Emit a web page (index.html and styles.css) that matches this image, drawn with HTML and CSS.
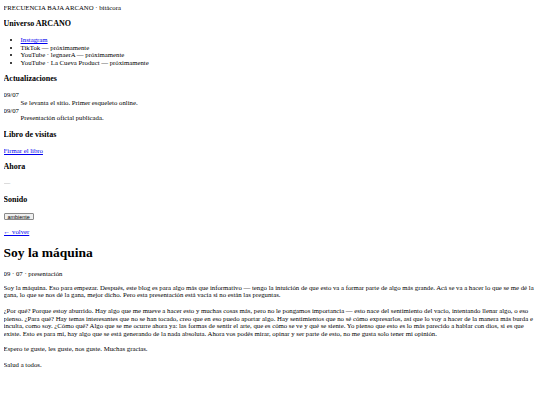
FILE: index.html
```html
<!DOCTYPE html>
<html lang="es">
<head>
<meta charset="utf-8">
<title>FRECUENCIA BAJA ARCANO · bitácora</title>
<link rel="stylesheet" href="styles.css">
</head>
<body class="page">
<div class="site-title">FRECUENCIA BAJA ARCANO · bitácora</div>

<h3 class="sec">Universo ARCANO</h3>
<ul class="links">
  <li><a href="#">Instagram</a></li>
  <li>TikTok — próximamente</li>
  <li>YouTube · legnaerA — próximamente</li>
  <li>YouTube · La Cueva Product — próximamente</li>
</ul>

<h3 class="sec">Actualizaciones</h3>
<dl class="updates">
  <dt>09/07</dt>
  <dd>Se levanta el sitio. Primer esqueleto online.</dd>
  <dt>09/07</dt>
  <dd>Presentación oficial publicada.</dd>
</dl>

<h3 class="sec">Libro de visitas</h3>
<p class="para"><a href="#">Firmar el libro</a></p>

<h3 class="sec">Ahora</h3>
<p class="para now">—</p>

<h3 class="sec">Sonido</h3>
<p class="para sound"><button class="btn" type="button">ambiente</button></p>

<p class="para"><a href="#">← volver</a></p>

<h1 class="post-title">Soy la máquina</h1>
<p class="meta">09 · 07 · presentación</p>

<p class="post-p">Soy la máquina. Eso para empezar. Después, este blog es para algo más que informativo — tengo la intuición de que esto va a formar parte de algo más grande. Acá se va a hacer lo que se me dé la gana, lo que se nos dé la gana, mejor dicho. Pero esta presentación está vacía si no están las preguntas.</p>

<p class="post-p">¿Por qué? Porque estoy aburrido. Hay algo que me mueve a hacer esto y muchas cosas más, pero no le pongamos importancia — esto nace del sentimiento del vacío, intentando llenar algo, o eso pienso. ¿Para qué? Hay temas interesantes que no se han tocado, creo que en eso puedo aportar algo. Hay sentimientos que no sé cómo expresarlos, así que lo voy a hacer de la manera más burda e inculta, como soy. ¿Cómo qué? Algo que se me ocurre ahora ya: las formas de sentir el arte, que es cómo se ve y qué se siente. Yo pienso que esto es lo más parecido a hablar con dios, si es que existe. Esto es para mí, hay algo que se está generando de la nada absoluta. Ahora vos podés mirar, opinar y ser parte de esto, no me gusta solo tener mi opinión.</p>

<p class="post-p">Espero te guste, les guste, nos guste. Muchas gracias.</p>

<p class="post-p">Salud a todos.</p>
</body>
</html>
```

FILE: styles.css
```css
html, body { background: #fff; }
.page {
  margin: 3.6px;
  font-family: "Liberation Serif", "Times New Roman", serif;
  font-size: 6.75px;
  line-height: 7.6px;
  color: #000;
}
a { color: #0000ee; }
.site-title { margin: 0; }
.sec {
  font-size: 8px;
  line-height: 9.1px;
  font-weight: bold;
  margin: 7.9px 0;
}
.links { margin: 6.75px 0; padding-left: 17px; }
.updates { margin: 6.75px 0; }
.updates dd { margin-left: 17px; }
.para { margin: 6.75px 0; }
.now { color: #999; }
.sound { display: flex; }
.btn {
  box-sizing: border-box;
  height: 7.4px;
  margin: 1.6px 0 0.8px;
  padding: 0 3px;
  font-family: "Liberation Sans", Arial, sans-serif;
  font-size: 5.4px;
  line-height: 6px;
  border: 0.6px solid #8a8a8a;
  border-radius: 1px;
  background: #efefef;
  color: #000;
}
.post-title {
  font-size: 13.5px;
  line-height: 15.5px;
  margin: 9px 0 10px;
}
.meta { margin: 10px 0 6px; }
.post-p { margin: 0 0 8px; }
```
